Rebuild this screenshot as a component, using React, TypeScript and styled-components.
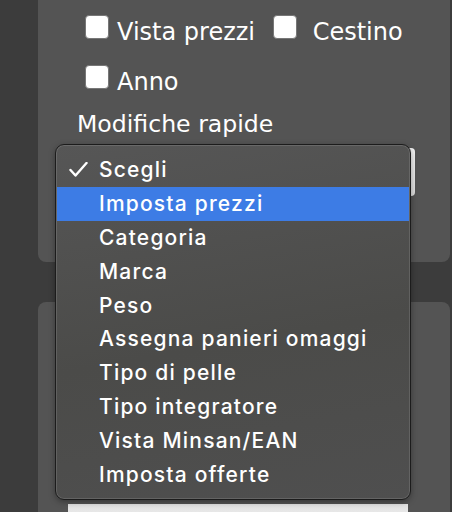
import React from "react";
import styled, { createGlobalStyle } from "styled-components";

const Global = createGlobalStyle`
  html, body {
    margin: 0;
    padding: 0;
    background: #3c3c3c;
    overflow: hidden;
  }
`;

const Page = styled.div`
  position: relative;
  width: 452px;
  height: 512px;
  overflow: hidden;
  background: #3c3c3c;
  padding-left: 38px;
  padding-right: 2px;
  box-sizing: border-box;
  display: flex;
  flex-direction: column;
  gap: 40px;
  font-family: "DejaVu Sans", Verdana, sans-serif;
  color: #fff;
`;

const Card = styled.div<{ $top?: boolean }>`
  background: #545454;
  border-radius: 8px;
  margin-top: ${(p) => (p.$top ? "-10px" : "0")};
  height: ${(p) => (p.$top ? "272px" : "auto")};
  flex: ${(p) => (p.$top ? "none" : "1 0 auto")};
  box-sizing: border-box;
  display: flex;
  flex-direction: column;
  padding: ${(p) => (p.$top ? "25px 0 0 47px" : "202px 0 0 30px")};
`;

const CheckRow = styled.div<{ $last?: boolean }>`
  display: flex;
  align-items: flex-start;
  height: 24px;
  margin-bottom: ${(p) => (p.$last ? 23 : 26)}px;
`;

const Box = styled.span`
  width: 22px;
  height: 22px;
  border: 1px solid #777;
  border-radius: 4px;
  background: #fff;
  flex: none;
`;

const Label = styled.span<{ $gap?: number }>`
  font-size: 24px;
  line-height: 24px;
  padding-top: 5px;
  margin-left: 8px;
  margin-right: ${(p) => p.$gap ?? 0}px;
  white-space: nowrap;
`;

const Caption = styled.div`
  font-size: 23.6px;
  line-height: 24px;
  margin-left: -8px;
`;

const SelectStub = styled.div`
  margin: 12px 0 0 -17px;
  width: 347px;
  height: 48px;
  border-radius: 4px;
  background: linear-gradient(#f4f4f4, #dcdcdc);
`;

const InputStub = styled.div`
  width: 340px;
  height: 40px;
  background: linear-gradient(#e4e4e4, #f2f2f2);
`;

const Menu = styled.ul`
  position: absolute;
  left: 55px;
  top: 144px;
  width: 356px;
  height: 356px;
  margin: 0;
  padding: 8px 1px 0;
  box-sizing: border-box;
  list-style: none;
  border: 1px solid #1c1c1c;
  border-radius: 9px;
  background: linear-gradient(170deg, #565656 0%, #4b4b49 55%, #4f4f4f 100%);
  box-shadow: inset 0 0 0 1px rgba(255, 255, 255, 0.12),
    0 2px 6px rgba(0, 0, 0, 0.35);
  font-family: Inter, "Liberation Sans", sans-serif;
`;

const Item = styled.li<{ $active?: boolean }>`
  height: 33.8px;
  display: flex;
  align-items: center;
  padding-left: 12px;
  font-size: 21px;
  font-weight: 500;
  letter-spacing: 1.2px;
  color: #fff;
  background: ${(p) => (p.$active ? "#3d7ce5" : "transparent")};
`;

const TickSlot = styled.span`
  width: 30px;
  height: 15px;
  flex: none;
  display: flex;
  align-items: center;
`;

const options = [
  "Scegli",
  "Imposta prezzi",
  "Categoria",
  "Marca",
  "Peso",
  "Assegna panieri omaggi",
  "Tipo di pelle",
  "Tipo integratore",
  "Vista Minsan/EAN",
  "Imposta offerte",
];

export default function App() {
  return (
    <>
      <Global />
      <Page>
        <Card $top>
          <CheckRow>
            <Box />
            <Label $gap={18}>Vista prezzi</Label>
            <Box />
            <Label>&nbsp;Cestino</Label>
          </CheckRow>
          <CheckRow $last>
            <Box />
            <Label>Anno</Label>
          </CheckRow>
          <Caption>Modifiche rapide</Caption>
          <SelectStub />
        </Card>
        <Card>
          <InputStub />
        </Card>
        <Menu>
          {options.map((o, i) => (
            <Item key={o} $active={i === 1}>
              <TickSlot>
                {i === 0 && (
                  <svg width="19" height="15" viewBox="0 0 19 15">
                    <path
                      d="M1.5 8 L6.5 13.5 L17.5 1"
                      fill="none"
                      stroke="#fff"
                      strokeWidth="2.4"
                      strokeLinecap="round"
                      strokeLinejoin="round"
                    />
                  </svg>
                )}
              </TickSlot>
              {o}
            </Item>
          ))}
        </Menu>
      </Page>
    </>
  );
}
